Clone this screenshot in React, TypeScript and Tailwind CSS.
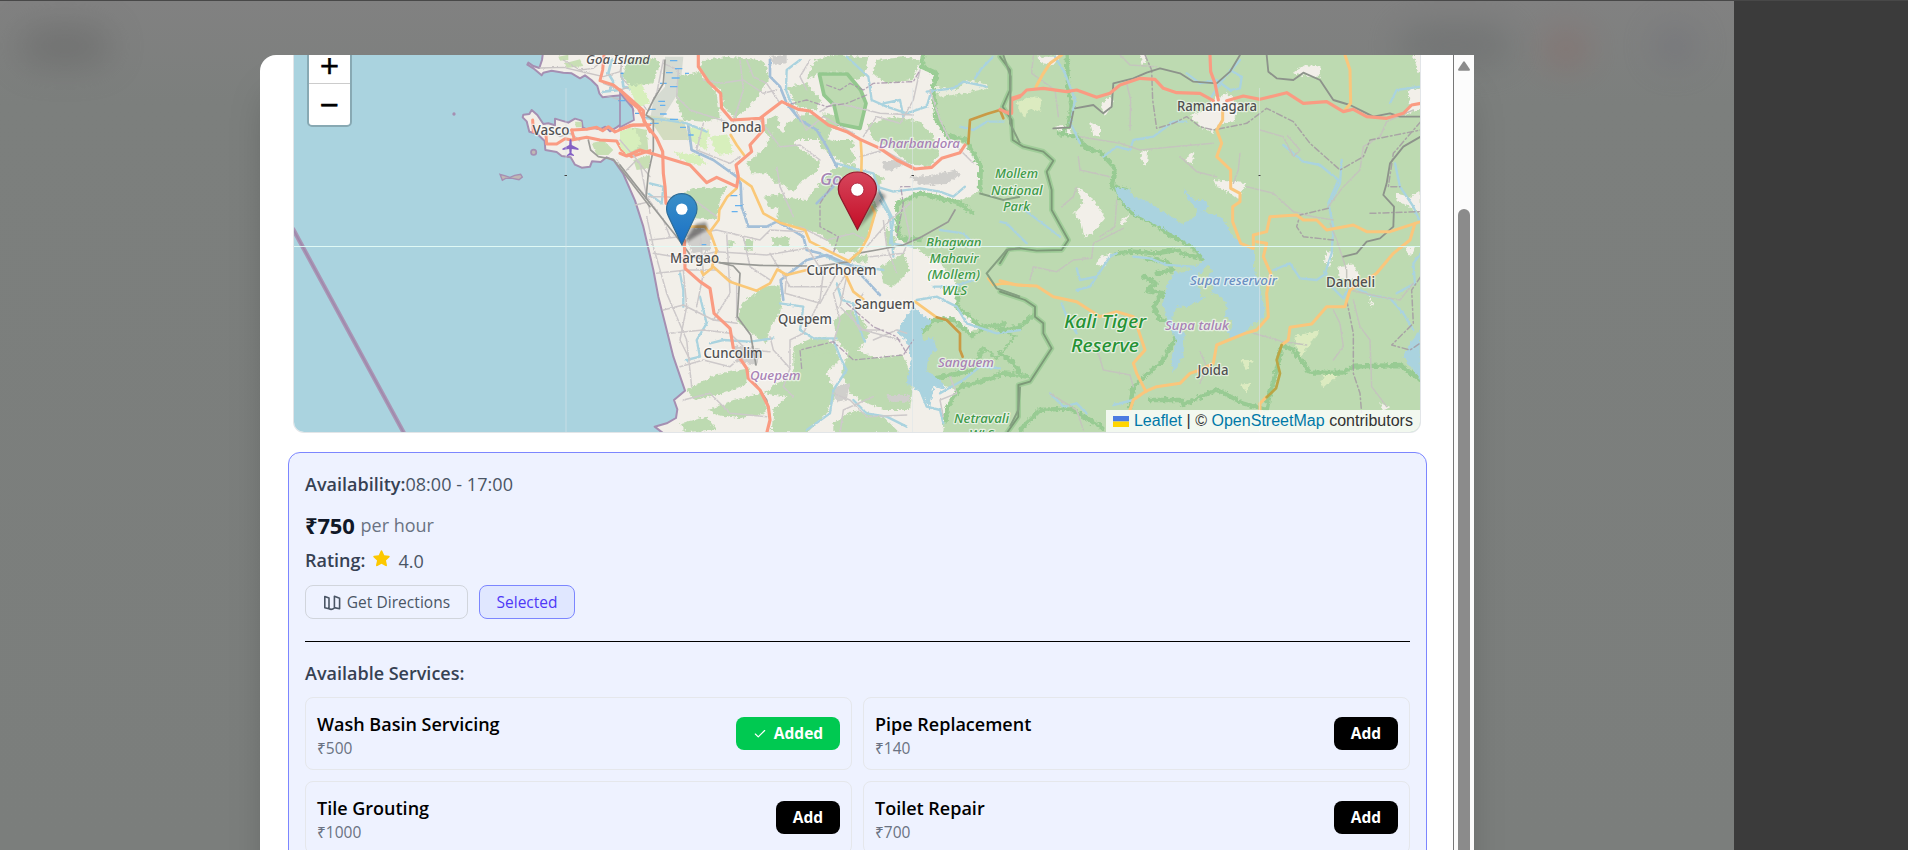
import { Check } from "lucide-react";
import type { ReactNode } from "react";

const LAND =
  "M880,30L876,60L868,84L850,78L835,68L832,74L850,85L875,106L880,98L905,92L940,98L965,100L990,115L1005,106L1024,120L1042,138L1048,160L1058,172L1090,168L1125,165L1142,190L1150,212L1145,240L1120,248L1100,262L1080,274L1066,260L1050,268L1030,264L1010,268L998,262L995,242L975,236L955,248L935,242L915,236L915,256L895,250L880,252L862,225L845,210L838,222L820,224L818,232L830,244L838,275L862,282L884,303L886,330L920,336L935,348L962,352L975,374L995,383L1020,380L1026,364L1052,366L1070,352L1092,362L1120,402L1155,482L1180,560L1210,690L1225,770L1245,850L1270,950L1305,1052L1272,1080L1282,1108L1278,1134L1250,1150L1214,1160L1240,1180L3500,1190L3500,30Z";

/* Strokes and fills share the coordinate space of the map section they sit in. */
const WEST = {
  forest: [
    "1140,100 1170,70 1205,60 1210,130 1170,135 1145,118",
    "1125,280 1150,262 1190,270 1195,330 1150,345 1120,310",
    "1025,310 1060,300 1090,330 1075,345 1040,345",
    "1150,360 1200,345 1200,385 1160,390",
    "945,70 990,58 1000,78 950,84",
    "925,50 955,44 955,60 930,62",
    "975,245 995,245 995,262 978,262",
  ],
  minor: [
    "870,84 940,82 1000,96 1060,110 1110,95 1120,50",
    "940,60 990,90 1030,85 1060,60",
    "1115,60 1112,110 1150,150 1190,210",
    "1060,130 1110,150 1170,130",
    "1100,360 1140,420 1190,470 1200,520",
    "1130,390 1160,360 1200,410",
    "1155,495 1200,485",
    "900,270 930,290 960,280 990,300",
  ],
  rail: ["1015,300 1022,330 1045,350 1090,358 1200,500"],
  red: [
    "1062,45 1058,90 1050,122 1090,135 1115,155 1140,185 1165,205 1182,240 1200,275",
    "965,270 1010,268 1040,262 1058,272 1075,260 1095,276 1140,256 1200,254",
    "888,285 890,312 920,312 945,296 965,300 1010,292 1050,300 1100,303 1115,330 1145,350 1200,332",
    "965,270 972,295",
    "848,240 850,275",
  ],
  river: ["1085,60 1075,100 1090,125 1080,150", "1115,100 1120,140 1160,150", "1060,155 1110,150"],
};

const CENTRAL = {
  forest: [
    "20,60 90,48 118,70 100,130 30,136 8,108",
    "250,60 330,50 430,62 450,115 420,160 385,205 345,235 312,200 302,150 262,120 240,88",
    "175,110 238,96 290,160 300,235 258,246 190,240 168,180",
    "500,142 560,130 602,180 590,212 530,200",
    "585,60 640,45 745,52 730,112 700,118 675,98 600,98 560,118",
    "770,60 860,50 900,62 880,120 800,130 760,100",
    "500,250 560,220 640,250 620,300 530,300 500,350 520,420 470,432 420,380 440,340 470,330",
    "470,260 520,310 560,340 600,365 590,395 550,420 520,455 480,430 450,400 395,400 380,365 430,330",
    "740,255 820,230 900,245 940,290 960,340 930,378 870,374 820,330 760,300",
    "600,290 690,320 710,360 680,375 640,350 600,320",
    "640,385 700,372 748,420 772,510 738,600 710,640 655,635 600,580 540,565 470,545 480,470 560,480 590,440",
    "150,478 220,445 320,440 300,480 290,540 225,535",
    "365,790 430,740 478,735 486,780 480,820 450,860 440,910 395,880 352,845",
    "640,840 690,808 728,840 748,880 722,925 680,935 650,900",
    "520,920 580,895 640,910 660,960 620,1000 650,1060 620,1120 560,1180 455,1180 460,1110 500,1070 430,1060 470,1030 520,1010",
    "690,920 770,955 850,945 880,1030 870,1110 800,1110 740,1090 690,1060 665,1000",
    "200,1050 290,1002 390,985 375,1035 300,1062 225,1080",
    "265,1110 340,1080 430,1060 440,1120 360,1135 290,1125",
    "640,1150 700,1110 790,1130 840,1180 640,1180",
    "180,1150 260,1130 290,1170 200,1180",
    "375,600 400,595 398,632 372,630",
    "325,600 345,602 340,624 325,620",
    "455,595 510,590 505,615 460,618",
    "610,220 660,230 650,270 620,258",
    "700,640 745,650 740,668 700,665",
    "780,680 850,640 870,690 820,740 790,730",
    "440,240 470,225 480,255 450,290 430,270",
    "640,300 700,300 700,325 650,320",
    "430,470 490,460 490,500 450,505",
    "760,400 790,410 780,440 760,430",
    "440,340 480,300 500,330 470,370",
    "560,900 620,890 640,930 590,950",
    "800,560 830,600 820,630 795,600",
    "910,30 1230,30 1230,1200 968,1200 976,1105 1010,1050 925,1020 880,905 940,838 1000,838 1040,880 1080,862 1050,830 1010,802 1022,745 960,670 835,595 832,492 900,460 1010,486 1080,455 1082,380 1035,315 985,290 950,245 945,172 932,138 955,100 905,80",
  ],
  meadow: [
    "0,270 45,265 65,310 20,345 0,320",
    "160,335 235,345 260,375 200,372",
    "270,290 320,280 340,340 290,345",
    "200,255 270,270 260,330 210,300",
    "535,160 550,165 545,205 533,200",
    "20,120 60,120 90,190 50,200",
  ],
  urban: [
    "870,410 930,408 1000,390 1020,402 985,432 900,434",
    "780,362 840,364 845,382 800,392",
    "190,560 270,570 275,630 215,640",
    "640,1040 690,1030 680,1080 650,1085",
    "800,1065 870,1065 870,1085 810,1085",
    "450,50 500,45 500,70 465,75",
    "340,915 430,930 410,975 350,965",
  ],
  minor: [
    "250,120 300,130 370,120 430,160 470,150",
    "130,70 175,90 170,170 210,210 320,245",
    "340,245 370,150 360,60",
    "480,190 440,130 400,110 380,60",
    "530,215 560,270 610,230 700,280",
    "420,240 480,320 540,315 600,360",
    "600,215 640,190 700,200 780,220 880,225",
    "730,290 770,230 840,250 880,180 900,90",
    "720,350 790,330 880,380",
    "0,300 60,370 80,470 130,540 150,590",
    "80,470 140,470 230,485 290,530",
    "90,600 180,590 290,570 420,600 450,570 550,575",
    "100,640 190,655 290,635 440,645 560,625",
    "110,700 200,690 290,690 350,735 350,840",
    "130,810 190,795 280,840 350,850",
    "150,880 250,870 330,880 380,930 450,935",
    "180,980 250,960 330,980 400,920",
    "190,1080 270,1060 330,1120 440,1130",
    "80,530 100,620 140,760 200,900 215,1040",
    "190,690 200,800 180,900 210,960",
    "240,560 250,700 230,800",
    "320,580 330,760 280,840",
    "370,590 390,680 450,720",
    "500,700 495,760 600,790 650,700",
    "560,620 610,700 600,780 550,880 510,900 510,980",
    "450,640 510,740 620,740",
    "640,910 660,840 640,760 680,700",
    "680,710 660,800 730,870 840,900",
    "730,760 690,820 720,870 790,870",
    "750,650 850,640 870,590 850,500",
    "740,620 810,540 870,490",
    "520,530 480,440 470,380",
    "540,560 620,600 700,580 740,600",
    "560,150 540,110 570,60",
    "930,150 960,240 990,300 1060,370",
    "450,890 460,930 510,985 490,1040 520,1070",
    "640,1060 690,1080 740,1130 860,1125",
    "660,1180 670,1110 760,1070",
    "760,900 830,870 860,880",
    "790,540 800,620 830,700",
    "990,1010 1010,1060 960,1080 970,1130",
    "80,220 110,160 130,60",
    "250,250 230,330 330,370 360,350",
  ],
  rail: [
    "78,475 85,400 100,330 100,240 78,225 100,180 130,130 135,60",
    "0,375 90,490 170,590 215,650 300,668 420,676 560,678",
    "300,668 340,678 360,700 352,830 392,885 408,975",
    "600,678 690,665 712,640 770,630 850,615 905,590 985,545 1005,510",
    "405,1030 440,1080 450,1130",
  ],
  boundary: [
    "620,135 660,150 690,130 730,150 760,130 880,125 900,90",
    "740,165 680,190 620,200 560,180 500,195",
    "545,985 540,930 640,905 700,960 850,945 880,900",
    "680,790 760,860 830,890 860,940",
    "870,440 842,440 850,490 830,590",
    "640,640 655,590 600,560 600,490 640,430",
  ],
  river: [
    "80,235 140,240 200,250 260,275",
    "540,60 500,90 498,150 525,220",
    "240,770 260,850 230,900 240,950 200,960",
    "270,910 310,900 390,905 460,895",
    "180,700 190,750 190,800",
    "480,790 550,800 540,870 580,895 650,895",
    "650,730 665,780 700,790 720,870 735,905",
    "640,900 660,950 680,990 640,1050 630,1120 560,1170",
    "680,50 745,110 755,180 800,200 860,220 920,200 935,150",
    "790,190 840,180 850,230",
    "920,155 1000,145 1030,125 1100,140",
    "650,370 700,385 760,400 780,460 820,540 810,610 880,620",
    "770,440 820,455 900,445 960,455 1000,470 1035,440",
    "780,480 810,530 820,650",
    "700,1080 740,1120 800,1130 860,1160",
    "890,780 950,770 1010,800 1040,850 1130,880 1200,870",
    "880,1000 920,1100 960,1110 970,1150",
    "1020,260 1060,270 1100,245 1150,245",
    "1065,115 1085,85 1120,50",
    "960,1060 1030,1020 1080,980 1140,985",
    "940,740 1000,740 1060,720",
    "960,570 1030,580 1060,610",
    "600,640 660,670 720,680 790,690",
    "90,430 130,440 125,490 85,460",
  ],
  bigRiver: [
    "450,60 450,110 480,140 500,190 540,240 590,270 620,320 650,380",
    "205,260 215,330 280,360 350,410 362,430 365,500 385,560 440,560 470,545 520,572 550,590 560,630 600,640",
    "490,780 482,720 560,660 620,645 700,680 780,765",
    "590,490 640,440 650,410",
  ],
  yellow: [
    "332,285 350,315 372,345",
    "360,415 395,440 430,520 480,548 555,570 570,605 640,640 690,665",
    "350,445 322,470 298,510 296,540 270,575 290,630 275,685 250,705 245,695",
    "190,590 210,560 255,560 272,585",
    "280,680 330,725 410,752 450,730 472,688 500,705 560,690",
    "722,300 725,350 724,395",
    "755,500 765,520 745,590 720,635 690,660",
    "675,700 700,755 730,778",
    "885,785 950,832",
    "1105,715 1120,735 1150,730 1230,738",
  ],
  brownRoad: ["950,832 980,840 1020,880 1020,930 1028,950", "1045,310 1050,240 1100,222 1140,210 1150,235"],
  red: [
    "235,45 235,80 265,125 302,160 305,205 335,240 420,235 485,185 535,208 570,213 625,255 680,275 720,298 780,325 830,360 885,387 935,382 965,355 1020,338 1035,315",
    "428,235 430,270 390,315 395,335 348,375 355,410 350,440 290,412 260,428 210,375 128,350 60,330 20,348 0,340",
    "0,150 40,185 70,212 72,245 110,295 128,335 130,400 135,440 138,490",
    "0,268 40,255 72,255",
    "193,600 195,685 240,725 270,745 282,820 330,865 340,925",
    "360,955 380,985 385,1015 420,1050 445,1100 450,1140 440,1180",
    "1200,170 1175,180 1175,220 1155,212",
  ],
};

const EAST = {
  clearing: [
    "1225,150 1275,140 1275,200 1215,225 1230,195",
    "1185,460 1230,470 1262,450 1262,520 1190,480",
    "1240,45 1270,45 1270,100 1255,95",
    "880,100 915,75 965,80 960,110 920,110",
    "420,45 440,45 435,70 428,72",
    "640,420 740,430 715,480 690,460 650,440",
    "620,190 680,160 720,200 700,245 650,255 640,280 600,260 570,225 610,215",
    "230,440 280,480 315,530 280,580 250,590 240,540 220,525 250,490",
    "300,200 330,165 340,190 315,225",
    "110,50 180,50 160,75 125,70",
    "270,245 300,260 300,290 280,285",
    "425,335 445,330 440,380 420,355",
    "560,350 585,335 575,370 560,365",
    "1015,680 1060,670 1080,720 1020,715",
    "1210,620 1245,620 1230,650",
    "1105,760 1118,790 1115,805",
    "300,650 335,640 310,680 290,672",
    "165,260 215,255 210,285 185,275",
    "360,545 390,520 370,560",
    "1140,1090 1170,1100 1150,1110",
    "980,630 1000,640 990,680 975,665",
  ],
  meadow: [
    "50,190 85,170 125,175 120,215 85,205 75,235 60,210",
    "880,890 960,870 930,915 900,950",
    "720,960 760,960 740,990",
    "980,990 1020,1000 970,1045 960,1030",
    "720,1035 750,1030 740,1055",
  ],
  lake: [
    "345,440 385,448 400,468 450,488 500,522 545,552 582,532 592,510 562,475 548,445 585,480 615,480 628,500 608,512 668,535 700,590 735,620 762,630 762,690 775,720 790,790 795,830 760,850 740,875 700,895 680,880 700,850 675,830 680,790 650,760 620,768 600,782 560,800 530,800 515,840 530,870 555,880 545,960 518,1000 515,950 530,900 505,850 488,790 500,740 520,700 570,690 615,660 580,618 530,590 470,555 410,525 375,495 350,465",
    "1235,900 1262,870 1262,1020 1230,980 1210,950",
  ],
  island: ["590,710 622,675 636,690 620,715 640,740 632,770 605,770"],
  minor: [
    "100,45 95,100 165,150 175,230",
    "360,45 390,75 470,80",
    "380,130 392,180 390,270",
    "240,290 300,300 360,310 420,330 520,320 640,310",
    "540,350 590,395 650,410",
    "720,340 715,390 700,430",
    "780,270 850,290 880,350 900,330 860,285",
    "740,440 820,460 880,515 940,530 1000,540",
    "1240,210 1160,245 1140,290 1090,320 1080,390 1030,440 985,500",
    "990,550 1010,600 1040,690 1040,740",
    "185,500 220,470 230,440",
    "350,480 345,560 300,590",
    "90,720 100,680 170,695 220,660 275,655 280,610 370,565",
    "235,350 240,390 330,410",
    "760,880 850,905 920,915",
    "295,940 310,990 390,1005 400,1040",
    "1000,810 1020,850 1030,920 1000,960",
    "1060,780 1080,860 1110,900 1115,1040 1160,1100",
    "1240,730 1200,780 1140,770 1050,750",
    "600,935 620,980 600,1030",
    "150,1060 230,1110 250,1170",
    "1130,1130 1180,1130 1190,1180",
  ],
  rail: [
    "225,205 280,195 310,220 335,200 340,130 400,115 440,98 480,85 540,100 580,125 650,130 690,95 720,45",
    "800,45 805,95 830,115 880,120 910,98 960,120 1000,180 1050,195 1090,215 1120,230 1170,220 1200,230 1262,230",
    "1262,290 1210,320 1170,370 1160,430 1150,465 1182,500 1180,560 1140,595 1100,605 1070,640 1030,650",
    "160,265 210,262 220,215",
  ],
  boundary: [
    "435,45 455,90 458,180 470,265 520,250 560,230 600,260 640,270 740,250 800,205 880,245 930,310 1020,390 1090,350 1110,300 1262,270",
    "985,505 900,525 890,560 910,590 1000,600",
    "1262,245 1180,340 1165,440 1200,440",
    "1040,780 1060,880 1060,1000 1080,1060 1085,1120",
    "1262,710 1235,750 1240,850 1175,915 1230,930 1260,910",
    "1110,520 1262,515",
  ],
  darkLine: [
    "0,50 30,90 30,150 8,200 35,240 38,300 70,320 130,335 160,362 140,395 155,450 155,510 205,600 185,630 110,632 60,625 25,628 0,670",
    "0,755 75,780 105,800 105,830 130,850 130,880 155,925 90,1025 55,1035 55,1130 20,1180",
  ],
  parkEdge: [
    "200,45 205,150 215,200 205,260 180,280 230,290 260,325 300,335 345,385 335,440 380,450",
    "345,440 360,475 400,520 470,555 520,590 570,615 610,655 560,645 530,630 470,640 400,635 350,640",
    "430,710 470,730 440,750 490,760 460,800 480,840 520,850 530,890 490,960 400,1040 390,1100",
    "450,1080 545,1080 550,1095 650,1048 730,1090 800,1110 810,1060 835,970 845,915 880,930 930,998 1030,998 1060,980 1200,975 1262,1020",
    "0,870 60,860 100,825",
    "60,1170 120,1110 210,1105 310,1165",
    "0,940 40,970 60,1000",
    "470,700 520,690 500,665 440,655",
  ],
  river: [
    "165,50 195,100 225,180 212,250 240,310",
    "310,350 350,320 390,330 400,300 460,290 520,245 560,245",
    "560,100 600,130 650,120 690,150 720,145 725,110 690,90",
    "635,170 660,130 720,60",
    "850,315 910,365 960,375 1015,420 985,490 1000,560 995,640 975,700",
    "1025,360 1020,430 985,500",
    "820,690 870,670 900,715 950,720 980,700",
    "1000,745 1030,775 1050,735 1110,765 1170,775 1210,820 1240,870",
    "1185,370 1200,440 1240,500 1262,550",
    "1170,190 1190,150 1262,140",
    "1262,640 1240,670 1245,730 1190,760",
    "230,750 270,740 330,650 350,640",
    "230,685 240,720 290,710",
    "185,790 200,830 230,880",
    "150,1060 190,1100 230,1090 260,1120",
    "0,545 20,550 80,610",
    "60,500 120,545 180,590",
    "340,1095 400,1080 430,1060",
    "400,650 450,655 500,675 580,680",
  ],
  yellow: [
    "185,45 150,70 130,100 108,140",
    "668,210 668,240 650,270 665,310 650,350 692,390 692,445 720,460 720,485 698,500 698,545 722,610 760,625 760,585 800,575 810,530 890,525 910,540 950,540 980,570 1060,555 1100,575 1170,575 1262,545",
    "1035,45 1050,90 1052,190 1035,210",
    "770,605 800,610 790,650 812,700 800,760 805,830 770,870 735,880 650,915 640,970 600,990 570,1000 540,1030 470,1040 435,1055 400,1080 390,1110",
    "0,722 50,735 110,738 160,770 230,785 300,830 350,815 400,830 415,870 435,930 400,970 410,1000 438,1055",
    "1245,550 1230,600 1180,640 1130,700 1050,750 1035,800 980,800 935,852 870,862 865,900 845,915",
    "800,1070 780,1090 780,1120",
  ],
  brownRoad: ["845,915 830,960 840,1000 828,1045 800,1072"],
  red: [
    "0,208 30,222 35,175 65,165 80,150 130,145 200,155 230,150 290,172 330,160 360,135 420,115 465,118 490,145 530,158 600,160 640,182",
    "630,45 632,95 645,130 655,180",
    "680,182 730,168 780,178 860,158 910,190 980,185 1030,215 1060,208 1100,230 1160,235 1210,220 1235,195 1262,190",
  ],
};

const line = (pts: string) => "M" + pts.split(" ").join("L");

type StrokeSet = { items: string[]; color: string; width: number; dash?: string; opacity?: number };

function Strokes({ items, color, width, dash, opacity }: StrokeSet) {
  return (
    <g fill="none" stroke={color} strokeWidth={width} strokeDasharray={dash} opacity={opacity} strokeLinejoin="round" strokeLinecap="round">
      {items.map((d) => (
        <path key={d} d={line(d)} />
      ))}
    </g>
  );
}

function Areas({ items, color, filter }: { items: string[]; color: string; filter?: string }) {
  return (
    <g fill={color} filter={filter}>
      {items.map((d) => (
        <path key={d} d={line(d) + "Z"} />
      ))}
    </g>
  );
}

type Label = { t: string; x: number; y: number; w: number; s: number; c?: string; i?: boolean };

const LABELS: Label[] = [
  { t: "Goa Island", x: 586, y: 64, w: 64, s: 13, c: "#555", i: true },
  { t: "Vasco", x: 532.5, y: 134.5, w: 37, s: 13.5 },
  { t: "Ponda", x: 721.5, y: 132, w: 40, s: 13.5 },
  { t: "Margao", x: 670, y: 263, w: 49, s: 13.5 },
  { t: "Curchorem", x: 806.5, y: 274.5, w: 70, s: 13.5 },
  { t: "Sanguem", x: 854.5, y: 308.5, w: 60.5, s: 13.5 },
  { t: "Quepem", x: 778, y: 324, w: 54, s: 13.5 },
  { t: "Cuncolim", x: 703.5, y: 358, w: 59, s: 13.5 },
  { t: "Ramanagara", x: 1177, y: 110.5, w: 80, s: 13.5 },
  { t: "Dandeli", x: 1326, y: 287, w: 49, s: 13.5 },
  { t: "Joida", x: 1197.5, y: 375, w: 31, s: 13.5 },
  { t: "Dharbandora", x: 879, y: 147.5, w: 81, s: 12.5, c: "#a882b5", i: true },
  { t: "Goa", x: 820, y: 185, w: 32, s: 17, c: "#a586b5", i: true },
  { t: "Quepem", x: 750, y: 380, w: 50.5, s: 12.5, c: "#a882b5", i: true },
  { t: "Sanguem", x: 938, y: 367, w: 56, s: 12.5, c: "#a882b5", i: true },
  { t: "Supa taluk", x: 1165, y: 330, w: 64, s: 12.5, c: "#a882b5", i: true },
  { t: "Supa reservoir", x: 1190, y: 285, w: 87, s: 12.5, c: "#6b8fc2", i: true },
  { t: "Mollem", x: 995, y: 178, w: 43, s: 13, c: "#3d9a48", i: true },
  { t: "National", x: 991, y: 194.5, w: 51.5, s: 13, c: "#3d9a48", i: true },
  { t: "Park", x: 1003, y: 211, w: 27, s: 13, c: "#3d9a48", i: true },
  { t: "Bhagwan", x: 926, y: 247, w: 55.5, s: 13, c: "#3d9a48", i: true },
  { t: "Mahavir", x: 929.5, y: 263, w: 49, s: 13, c: "#3d9a48", i: true },
  { t: "(Mollem)", x: 927.5, y: 279, w: 52.5, s: 13, c: "#3d9a48", i: true },
  { t: "WLS", x: 942, y: 295, w: 25, s: 13, c: "#3d9a48", i: true },
  { t: "Netravali", x: 954, y: 423, w: 55, s: 13, c: "#3d9a48", i: true },
  { t: "WLS", x: 969, y: 439, w: 25, s: 13, c: "#3d9a48", i: true },
  { t: "Kali Tiger", x: 1064, y: 328, w: 82, s: 18.5, c: "#259234", i: true },
  { t: "Reserve", x: 1071, y: 352, w: 68, s: 18.5, c: "#259234", i: true },
];

const PIN = "M12.5.5C5.9.5.5 5.9.5 12.5c0 2 .7 4.3 1.6 6.1L12.5 40.6l10.4-22c.9-1.8 1.6-4.1 1.6-6.1C24.5 5.9 19.1.5 12.5.5z";

function RegionMap() {
  return (
    <svg className="block h-full w-full" viewBox="294 55 1126 377" preserveAspectRatio="none" aria-hidden="true">
      <defs>
        <filter id="ragged" x="-5%" y="-5%" width="110%" height="110%">
          <feTurbulence type="fractalNoise" baseFrequency="0.09" numOctaves="3" seed="4" result="n" />
          <feDisplacementMap in="SourceGraphic" in2="n" scale="17" xChannelSelector="R" yChannelSelector="G" />
        </filter>
        <filter id="wavy" x="-5%" y="-5%" width="110%" height="110%">
          <feTurbulence type="fractalNoise" baseFrequency="0.12" numOctaves="2" seed="9" result="n" />
          <feDisplacementMap in="SourceGraphic" in2="n" scale="7" xChannelSelector="R" yChannelSelector="G" />
        </filter>
        <filter id="soften">
          <feGaussianBlur stdDeviation="0.45" />
        </filter>
        <filter id="shade" x="-50%" y="-50%" width="200%" height="200%">
          <feGaussianBlur stdDeviation="1.6" />
        </filter>
        <linearGradient id="bluePin" x1="0" y1="0" x2="0" y2="1">
          <stop offset="0" stopColor="#3a8fc8" />
          <stop offset="1" stopColor="#1a70c5" />
        </linearGradient>
        <linearGradient id="redPin" x1="0" y1="0" x2="0" y2="1">
          <stop offset="0" stopColor="#d6465c" />
          <stop offset="1" stopColor="#c40d26" />
        </linearGradient>
      </defs>

      <rect x="294" y="55" width="1126" height="377" fill="#aad3df" />
      <g filter="url(#soften)">
        <g transform="translate(250 40) scale(.33333)">
          <path d={LAND} fill="#f2efe9" stroke="#a58fb2" strokeWidth="6" strokeLinejoin="round" />
          <path d="M128,565L465,1185" stroke="#a996b5" strokeWidth="13" />
          <path d="M128,565L465,1185" stroke="#9f88ac" strokeWidth="4" />
          <circle cx="612" cy="222" r="5" fill="#a58fb2" />
          <circle cx="851" cy="337" r="8" fill="#c0b8b4" stroke="#a58fb2" strokeWidth="5" />
          <path d="M750,403l14,4 16,5 14,-6 18,-3 5,8 -10,8 -20,-4 -20,0 -10,6z" fill="#c0b8b4" stroke="#a58fb2" strokeWidth="4" />
          <g filter="url(#wavy)">
            <Areas items={WEST.forest} color="#c8dfb4" />
            <Strokes items={WEST.river} color="#aad3df" width={8} />
            <Strokes items={WEST.minor} color="#c9c5c5" width={4} />
          </g>
          <path d="M1068,168l34,12 28,10 10,18 -6,-30z" fill="#bdc3c8" />
          <path d="M1105,182h24M1112,100h18M1155,220h14M1186,232h14" stroke="#5aa7e8" strokeWidth="4" />
          <Strokes items={WEST.rail} color="#9c9c98" width={5} />
          <Strokes items={WEST.red} color="#fa9b82" width={9} />
        </g>

        <g transform="translate(1000 40) scale(.33333)">
          <rect x="30" y="0" width="1300" height="1200" fill="#bddab1" />
        </g>

        <g transform="translate(620 40) scale(.33333)">
          <path d="M0,160L38,205L42,240L0,262Z" fill="#aad3df" stroke="#a58fb2" strokeWidth="5" />
          <path d="M135,50H190L180,150L130,230L90,240L100,180L135,140Z" fill="#d6dbd2" />
          <path d="M80,225L190,240L210,300L130,300Z" fill="#d3dcc0" />
          <Areas items={CENTRAL.meadow} color="#d7efbc" filter="url(#ragged)" />
          <Areas items={CENTRAL.forest} color="#bddab1" filter="url(#ragged)" />
          <g filter="url(#ragged)">
            <path
              d="M910,40L905,80L950,100L940,140L950,240L985,290L1040,300L1082,380L1080,455M835,595L832,492L900,460L1010,486L1060,520M835,595L905,600M1020,740L1010,802L1050,830L1080,862L1160,850M880,905L940,840L1000,838L1060,890L1110,860L1180,890L1130,950L1090,920L1060,990L925,1020M976,1150L980,1105L1020,1040L1100,1020L1150,1000L1230,1010"
              fill="none"
              stroke="#9bcd95"
              strokeWidth="14"
            />
            <path
              d="M880,800L935,845L905,870L910,905L940,890L950,930L925,950L920,990L960,1020L980,1050L940,1040L930,1110L905,1060L860,1030L875,960L860,900L830,880L845,850Z"
              fill="#aad3df"
            />
            <path d="M1060,890L1110,860L1180,890L1130,950L1090,920Z" fill="#bddab1" />
            <path d="M940,140L1010,150L1040,120L1100,130L1105,145L1030,160L960,170Z" fill="#e9ecdc" />
          </g>
          <path d="M598,102L682,102L722,150L738,190L720,265L655,252L642,195L612,165Z" fill="#bddab1" stroke="#93c88e" strokeWidth="11" strokeLinejoin="round" />
          <Areas items={CENTRAL.urban} color="#d0cfcc" filter="url(#ragged)" />
          <g filter="url(#wavy)">
            <Strokes items={CENTRAL.river} color="#aad3df" width={7} />
            <Strokes items={CENTRAL.bigRiver} color="#a3bfd8" width={8} />
            <Strokes items={CENTRAL.minor} color="#cdc9ca" width={4.5} />
          </g>
          <Strokes items={CENTRAL.boundary} color="#a794ab" width={4} dash="16 8 5 8" opacity={0.8} />
          <path
            d="M150,62h22M165,86h22M138,98h20M155,114h24M120,130h20M150,140h22M115,184h20M85,208h22M120,222h20M90,250h26M150,238h24M180,262h18M205,285h16M330,467h22M345,497h22M335,515h18M0,182h16M245,614h14M120,196h16M195,100h12"
            stroke="#66b1ee"
            strokeWidth="4"
          />
          <Strokes items={CENTRAL.rail} color="#999a96" width={5} />
          <Strokes items={CENTRAL.yellow} color="#fac878" width={8} />
          <Strokes items={CENTRAL.brownRoad} color="#c99a45" width={8} />
          <Strokes items={CENTRAL.red} color="#fa9b82" width={9.5} />
        </g>

        <g transform="translate(1000 40) scale(.33333)">
          <Areas items={EAST.clearing} color="#f2efe9" filter="url(#ragged)" />
          <Areas items={EAST.meadow} color="#dcebc0" filter="url(#ragged)" />
          <g filter="url(#ragged)">
            <Strokes items={EAST.parkEdge} color="#98cb93" width={13} />
            <Areas items={EAST.lake} color="#aad3df" />
            <Areas items={EAST.island} color="#bddab1" />
          </g>
          <g filter="url(#wavy)">
            <Strokes items={EAST.river} color="#aad3df" width={7} />
            <Strokes items={EAST.minor} color="#c4c5bd" width={4.5} />
          </g>
          <Strokes items={EAST.boundary} color="#a59ba3" width={4.5} dash="18 8 5 8" opacity={0.85} />
          <Strokes items={EAST.darkLine} color="#9acb94" width={16} opacity={0.8} />
          <Strokes items={EAST.darkLine} color="#7b9977" width={5.5} />
          <Strokes items={EAST.rail} color="#8d938b" width={5.5} />
          <Strokes items={EAST.yellow} color="#fac67c" width={9} />
          <Strokes items={EAST.brownRoad} color="#bba545" width={8} />
          <Strokes items={EAST.red} color="#fa9b82" width={9.5} />
        </g>
        <path d="M1150,45L1172,110L1170,250L1200,310" transform="translate(620 40) scale(.33333)" fill="none" stroke="#869f82" strokeWidth="6" />
        <path d="M1078,460L1150,480L1200,470M1200,625L1160,630L1100,700L1130,745L1200,770M1200,1040L1195,1110L1170,1160" transform="translate(620 40) scale(.33333)" fill="none" stroke="#869f82" strokeWidth="6" />
        <path
          transform="translate(570.5 148)"
          d="M-1,-8Q0,-10 1,-8L1.300,-3L8,0.500V2L1.300,1L1,5L3.500,7V8L0,7.200L-3.500,8V7L-1,5L-1.300,1L-8,2V0.500L-1.300,-3Z"
          fill="#8461c4"
        />
      </g>
      <g fontFamily="'Noto Sans','Open Sans',sans-serif" fontWeight="500" paintOrder="stroke" strokeLinejoin="round">
        {LABELS.map((l) => (
          <text
            key={l.t + l.x}
            x={l.x}
            y={l.y}
            textLength={l.w}
            lengthAdjust="spacingAndGlyphs"
            fontSize={l.s}
            fontStyle={l.i ? "italic" : "normal"}
            fill={l.c ?? "#505050"}
            stroke="#ffffff"
            strokeOpacity=".6"
            strokeWidth="2.4"
          >
            {l.t}
          </text>
        ))}
      </g>

      <path d="M294,246.500H1420" stroke="#e2fbf6" strokeOpacity=".95" />
      <path d="M566,88V432M912.500,88V432M1259.500,88V432" stroke="#dfe6ea" strokeOpacity=".55" />
      <path d="M564.500,175.500h2.500M911.500,175.500h2.500M1258.500,175.500h2" stroke="#444" />

      <path d="M682,245L696,224L706,222L708,229Z" fill="#000" opacity=".4" filter="url(#shade)" />
      <path d="M858,229L880,205L886,196L878,190Z" fill="#000" opacity=".35" filter="url(#shade)" />
      <g transform="translate(665.900 193) scale(1.27)">
        <path d={PIN} fill="url(#bluePin)" stroke="#2e6c97" strokeWidth=".9" />
        <circle cx="12.500" cy="12.700" r="4.500" fill="#fff" />
      </g>
      <g transform="translate(837.500 171.300) scale(1.590 1.440)">
        <path d={PIN} fill="url(#redPin)" stroke="#8f1a2c" strokeWidth=".8" />
      </g>
      <circle cx="857.300" cy="189.700" r="6.600" fill="#fff" stroke="#a51c33" strokeWidth=".8" />
    </svg>
  );
}

function MapPanel() {
  return (
    <div className="relative ml-[33px] h-[378px] w-[1128px] shrink-0 overflow-hidden rounded-b-[11px] border border-t-0 border-[#e2e5e8]">
      <RegionMap />
      <div className="absolute -top-4 left-[13px] w-[45px] overflow-hidden rounded-[5px] border-2 border-[#88a9b3] bg-white font-['DejaVu_Sans',sans-serif] text-[25px] text-black [-webkit-text-stroke:0.7px_black]">
        <div className="flex h-[43px] items-end justify-center border-b border-[#ccc] leading-[34px]">+</div>
        <div className="flex h-[41px] items-center justify-center pb-px leading-none">−</div>
      </div>
      <div className="absolute right-0 bottom-0 flex h-[22px] items-center bg-white/80 pr-[7px] pl-[7px] font-['Liberation_Sans',Arial,sans-serif] text-[16px] text-[#333]">
        <svg className="mr-[5px] h-[11px] w-4" viewBox="0 0 16 11">
          <path d="M0 0h16v5.500H0z" fill="#4c7be1" />
          <path d="M0 5.500h16V11H0z" fill="#ffd500" />
        </svg>
        <span className="whitespace-pre tracking-[0.02px]">
          <span className="text-[#0078a8]">Leaflet</span> | © <span className="text-[#0078a8]">OpenStreetMap</span> contributors
        </span>
      </div>
    </div>
  );
}

function Service({ name, price, children }: { name: string; price: string; children: ReactNode }) {
  return (
    <div className="flex h-[73px] items-center justify-between rounded-[8px] border border-[#e5e7eb] px-[11px]">
      <div className="pt-[2px]">
        <div className="text-[18px] leading-[26px] font-semibold text-black">{name}</div>
        <div className="text-[15.500px] leading-[22px] text-[#6a7282]">{price}</div>
      </div>
      {children}
    </div>
  );
}

function AddButton() {
  return <button className="h-[33px] w-[64px] rounded-[8px] bg-black text-[15.500px] font-bold text-white">Add</button>;
}

function ProviderCard() {
  return (
    <div className="mt-[19px] ml-[28px] w-[1139px] shrink-0 rounded-[12px] border border-[#7c86ff] bg-[#eef2ff] px-4 pt-[18px] pb-6">
      <div className="flex h-[27px] items-center text-[18px] text-[#4a5565]">
        <span className="font-semibold text-[#364153]">Availability:</span>
        <span className="tracking-[0.05px]">08:00 - 17:00</span>
      </div>
      <div className="mt-3 flex h-[30px] items-center gap-[6px]">
        <span className="text-[22px] font-bold tracking-[-0.2px] text-[#101828]">₹750</span>
        <span className="text-[18px] text-[#6a7282]">per hour</span>
      </div>
      <div className="mt-[7px] flex h-[26px] items-center text-[18px]">
        <span className="font-semibold text-[#364153]">Rating:</span>
        <svg className="mb-[3px] ml-2 h-[17px] w-[17px]" viewBox="0 0 24 24" fill="#fcc800">
          <path d="M10.800 1.300c.5-1.100 1.900-1.100 2.400 0l2.700 6 6.500.7c1.200.1 1.700 1.500.8 2.300l-4.900 4.400 1.400 6.500c.2 1.200-1 2-2 1.400L12 19.300l-5.700 3.300c-1 .6-2.200-.2-2-1.400l1.400-6.500L.8 10.300C-.1 9.500.4 8.100 1.600 8l6.500-.7z" />
        </svg>
        <span className="ml-2 pt-[2px] text-[#4a5565]">4.0</span>
      </div>
      <div className="mt-3 flex gap-[11px] text-[15.500px]">
        <button className="flex h-[34px] w-[163px] items-center justify-center gap-[6px] rounded-[8px] border border-[#d1d5dc] pt-px text-[#4a5565]">
          <svg className="h-4 w-[18px]" viewBox="0 0 18 16" fill="none" stroke="currentColor" strokeWidth="1.600" strokeLinejoin="round" strokeLinecap="round">
            <path d="M1.800 1.500L6 3v10.800l-4.200-1.100zM6 13.800q2.800 1.400 5.400-.8M11.400 1.200l5.200 2v10.600l-5.200-1.200z" />
          </svg>
          <span className="tracking-[0.050px]">Get Directions</span>
        </button>
        <button className="h-[34px] w-[96px] rounded-[8px] border border-[#7c86ff] bg-[#e0e7ff] pt-px text-[#4f39f6]">Selected</button>
      </div>
      <div className="mt-[22px] h-px bg-black" />
      <div className="mt-[18px] flex h-[26px] items-center text-[18px] font-semibold text-[#364153]">Available Services:</div>
      <div className="mt-[11px] grid grid-cols-2 gap-[11px]">
        <Service name="Wash Basin Servicing" price="₹500">
          <button className="flex h-[33px] w-[104px] items-center justify-center gap-[7px] rounded-[8px] bg-[#00c951] text-[15.500px] font-bold text-white">
            <Check size={14} strokeWidth={2} />
            Added
          </button>
        </Service>
        <Service name="Pipe Replacement" price="₹140">
          <AddButton />
        </Service>
        <Service name="Tile Grouting" price="₹1000">
          <AddButton />
        </Service>
        <Service name="Toilet Repair" price="₹700">
          <AddButton />
        </Service>
      </div>
    </div>
  );
}

export default function App() {
  return (
    <div className="flex h-[850px] w-full overflow-hidden border-t border-[#484848] bg-[#3b3b3b] font-['Open_Sans','Noto_Sans',sans-serif]">
      <main className="relative flex w-[1734px] shrink-0 justify-center overflow-hidden bg-linear-to-b from-[#818181] via-[#7c7f7d] via-12% to-[#7b7e7c] pt-[54px]">
        <div className="absolute top-[27px] left-[20px] h-[36px] w-[90px] rounded-full bg-[#5c5c5c] opacity-45 blur-[18px]" />
        <div className="absolute top-[27px] left-[1400px] h-[34px] w-[110px] rounded-full bg-[#626566] opacity-50 blur-[18px]" />
        <div className="absolute top-[30px] left-[1544px] h-[36px] w-[44px] rounded-full bg-[#8b6864] opacity-50 blur-[17px]" />
        <div className="absolute top-[27px] left-[1655px] h-[36px] w-[40px] rounded-full bg-[#696a76] opacity-45 blur-[17px]" />
        <section className="relative flex h-[900px] w-[1214px] shrink-0 overflow-hidden rounded-tl-[16px] bg-white shadow-[0_31px_40px_-12px_rgba(0,0,0,0.25)]">
          <div className="flex w-[1193px] shrink-0 flex-col">
            <MapPanel />
            <ProviderCard />
          </div>
          <div className="flex w-[21px] shrink-0 flex-col items-center border-l border-[#777] bg-[#fcfcfc] pt-[6px] pr-px">
            <svg className="h-[10px] w-3" viewBox="0 0 12 10">
              <path d="M5.200.8q.8-1.100 1.600 0L11.700 8q.7 1.700-.8 1.700H1.100Q-.4 9.700.3 8z" fill="#8b8b8b" />
            </svg>
            <div className="mt-[138px] w-3 flex-1 rounded-t-full bg-[#8b8b8b]" />
          </div>
        </section>
      </main>
    </div>
  );
}
